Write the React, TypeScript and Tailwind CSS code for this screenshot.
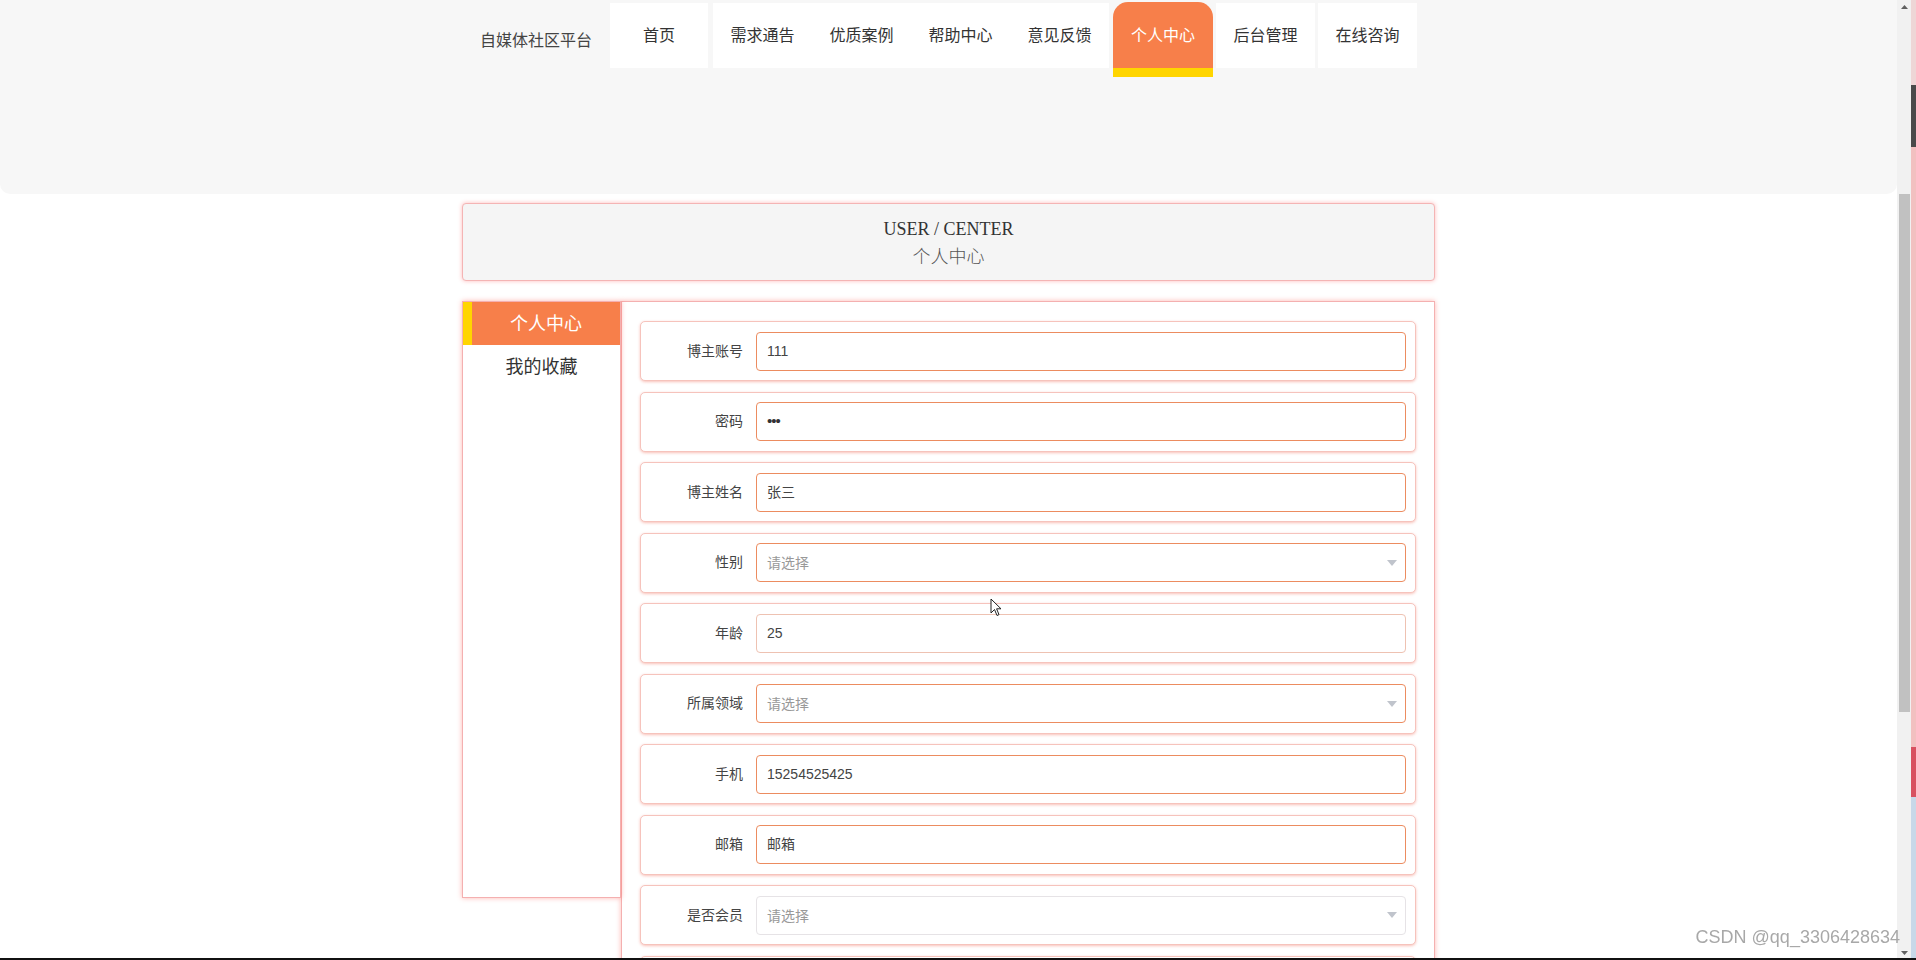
import React from "react";

const cjk = "font-['Noto_Sans_CJK_SC','Noto_Sans',sans-serif]";

type Field = {
  label: string;
  value?: string;
  placeholder?: string;
  select?: boolean;
  tone?: "orange" | "soft" | "gray";
  password?: boolean;
};

const fields: Field[] = [
  { label: "博主账号", value: "111" },
  { label: "密码", value: "•••", password: true },
  { label: "博主姓名", value: "张三" },
  { label: "性别", placeholder: "请选择", select: true },
  { label: "年龄", value: "25", tone: "soft" },
  { label: "所属领域", placeholder: "请选择", select: true },
  { label: "手机", value: "15254525425" },
  { label: "邮箱", value: "邮箱", tone: "orange" },
  { label: "是否会员", placeholder: "请选择", select: true, tone: "gray" },
  { label: "", value: "" },
];

function Tile({ label, className = "" }: { label: string; className?: string }) {
  return (
    <div
      className={`h-[65px] mt-[3px] pb-[4px] bg-white flex items-center justify-center text-[16px] text-[#333] ${className}`}
    >
      {label}
    </div>
  );
}

function Header() {
  return (
    <header className="h-[194px] bg-[#f7f7f7] rounded-b-[10px]">
      <div className={`w-[973px] mx-auto flex items-start ${cjk}`}>
        <div className="w-[148px] h-[78px] flex items-center justify-center text-[16px] text-[#444]">
          自媒体社区平台
        </div>
        <Tile label="首页" className="w-[98px]" />
        <div className="flex ml-[5px]">
          <Tile label="需求通告" className="w-[99px]" />
          <Tile label="优质案例" className="w-[99px]" />
          <Tile label="帮助中心" className="w-[99px]" />
          <Tile label="意见反馈" className="w-[99px]" />
        </div>
        <div className="ml-[4px] mt-[2px] w-[100px] flex flex-col">
          <div className="h-[66px] pb-[3px] bg-[#f77f4a] rounded-t-[15px] flex items-center justify-center text-[16px] text-white">
            个人中心
          </div>
          <div className="h-[9px] bg-[#ffd500]" />
        </div>
        <Tile label="后台管理" className="w-[99px] ml-[3px]" />
        <Tile label="在线咨询" className="w-[99px] ml-[3px]" />
      </div>
    </header>
  );
}

function Arrow() {
  return (
    <svg width="10" height="6" viewBox="0 0 10 6" className="shrink-0">
      <path d="M0 0 L10 0 L5 6 Z" fill="#c0c4cc" />
    </svg>
  );
}

function FormRow({ f }: { f: Field }) {
  const border =
    f.tone === "gray"
      ? "border-[#e6e3e6]"
      : f.tone === "soft"
      ? "border-[#eec2b2]"
      : "border-[#ec8c60]";
  return (
    <div className="h-[60px] shrink-0 bg-white rounded-[5px] border border-[#f6c3bc] shadow-[0_1px_3px_rgba(240,100,80,0.4)] flex items-center pr-[9px]">
      <div className="w-[115px] shrink-0 pr-[13px] pb-[2px] text-right text-[14px] text-[#444]">
        {f.label}
      </div>
      <div
        className={`flex-1 h-[39px] rounded-[4px] border ${border} flex items-center pl-[10px] pr-[8px] bg-white`}
      >
        {f.value !== undefined ? (
          <span
            className={`flex-1 ${
              f.password ? "text-[15px] tracking-[-1px] text-[#333]" : "text-[14px] text-[#444]"
            } font-['Liberation_Sans','Noto_Sans_CJK_SC',sans-serif]`}
          >
            {f.value}
          </span>
        ) : (
          <span className="flex-1 text-[14px] text-[#999]">{f.placeholder}</span>
        )}
        {f.select && <Arrow />}
      </div>
    </div>
  );
}

export default function App() {
  return (
    <div className={`h-screen w-full flex overflow-hidden bg-white ${cjk}`}>
      <div className="flex-1 h-full overflow-hidden">
        <Header />

        {/* banner */}
        <div className="w-[973px] mx-auto mt-[9px] h-[78px] bg-[#f5f5f5] rounded-[4px] border border-[#f4b4b4] shadow-[0_0_4px_rgba(255,60,60,0.35)] flex flex-col items-center justify-center">
          <div className="text-[18px] leading-[26px] text-[#333] font-['Liberation_Serif',serif]">
            USER / CENTER
          </div>
          <div className="text-[18px] leading-[26px] text-[#555] font-light">个人中心</div>
        </div>

        {/* content */}
        <div className="w-[973px] mx-auto mt-[20px] flex items-start">
          <aside className="w-[159px] h-[597px] shrink-0 bg-white border border-[#f4b0b0] shadow-[0_0_5px_rgba(255,70,60,0.4)] relative z-10">
            <div className="h-[43px] pb-[3px] bg-[#f77f4a] border-l-[9px] border-[#ffd500] flex items-center justify-center text-[18px] text-white">
              个人中心
            </div>
            <div className="h-[43px] pb-[3px] flex items-center justify-center text-[18px] text-[#333]">
              我的收藏
            </div>
          </aside>
          <main className="flex-1 bg-white border border-[#f4b0b0] shadow-[0_0_5px_rgba(255,70,60,0.4)] px-[18px] pt-[19px] pb-[30px] flex flex-col gap-[10.5px]">
            {fields.map((f, i) => (
              <FormRow key={i} f={f} />
            ))}
          </main>
        </div>
      </div>

      {/* scrollbar */}
      <div className="w-[14px] h-full bg-[#f1f1f1] flex flex-col items-center relative">
        <div className="h-[14px] flex items-center justify-center">
          <svg width="7" height="4" viewBox="0 0 7 4">
            <path d="M0 4 L3.5 0 L7 4 Z" fill="#606060" />
          </svg>
        </div>
        <div className="mt-[180px] w-[11px] h-[518px] bg-[#c1c1c1]" />
        <div className="mt-auto h-[14px] flex items-center justify-center">
          <svg width="7" height="4" viewBox="0 0 7 4">
            <path d="M0 0 L3.5 4 L7 0 Z" fill="#606060" />
          </svg>
        </div>
      </div>
      <div className="w-[5px] h-full bg-[#f2c4c4] flex flex-col">
        <div className="h-[85px] bg-[#eed6d6]" />
        <div className="h-[62px] bg-[#4a4a4a]" />
        <div className="h-[600px] bg-[#f2c0c0]" />
        <div className="h-[50px] bg-[#d85060]" />
        <div className="flex-1 bg-[#c8d8e8]" />
      </div>

      {/* watermark */}
      <div className="fixed right-[16px] bottom-[9px] text-[18px] text-[#a8a8a8] font-['Liberation_Sans',sans-serif]">
        CSDN @qq_3306428634
      </div>
      <div className="fixed left-0 right-0 bottom-0 h-[2px] bg-[#111]" />

      {/* cursor */}
      <svg
        className="fixed left-[990px] top-[598px]"
        width="12"
        height="19"
        viewBox="0 0 12 19"
      >
        <path d="M1 1 L1 15 L4.5 11.5 L7 17.5 L9 16.6 L6.6 10.8 L11 10.8 Z" fill="#fff" stroke="#222" strokeWidth="1" />
      </svg>
    </div>
  );
}
